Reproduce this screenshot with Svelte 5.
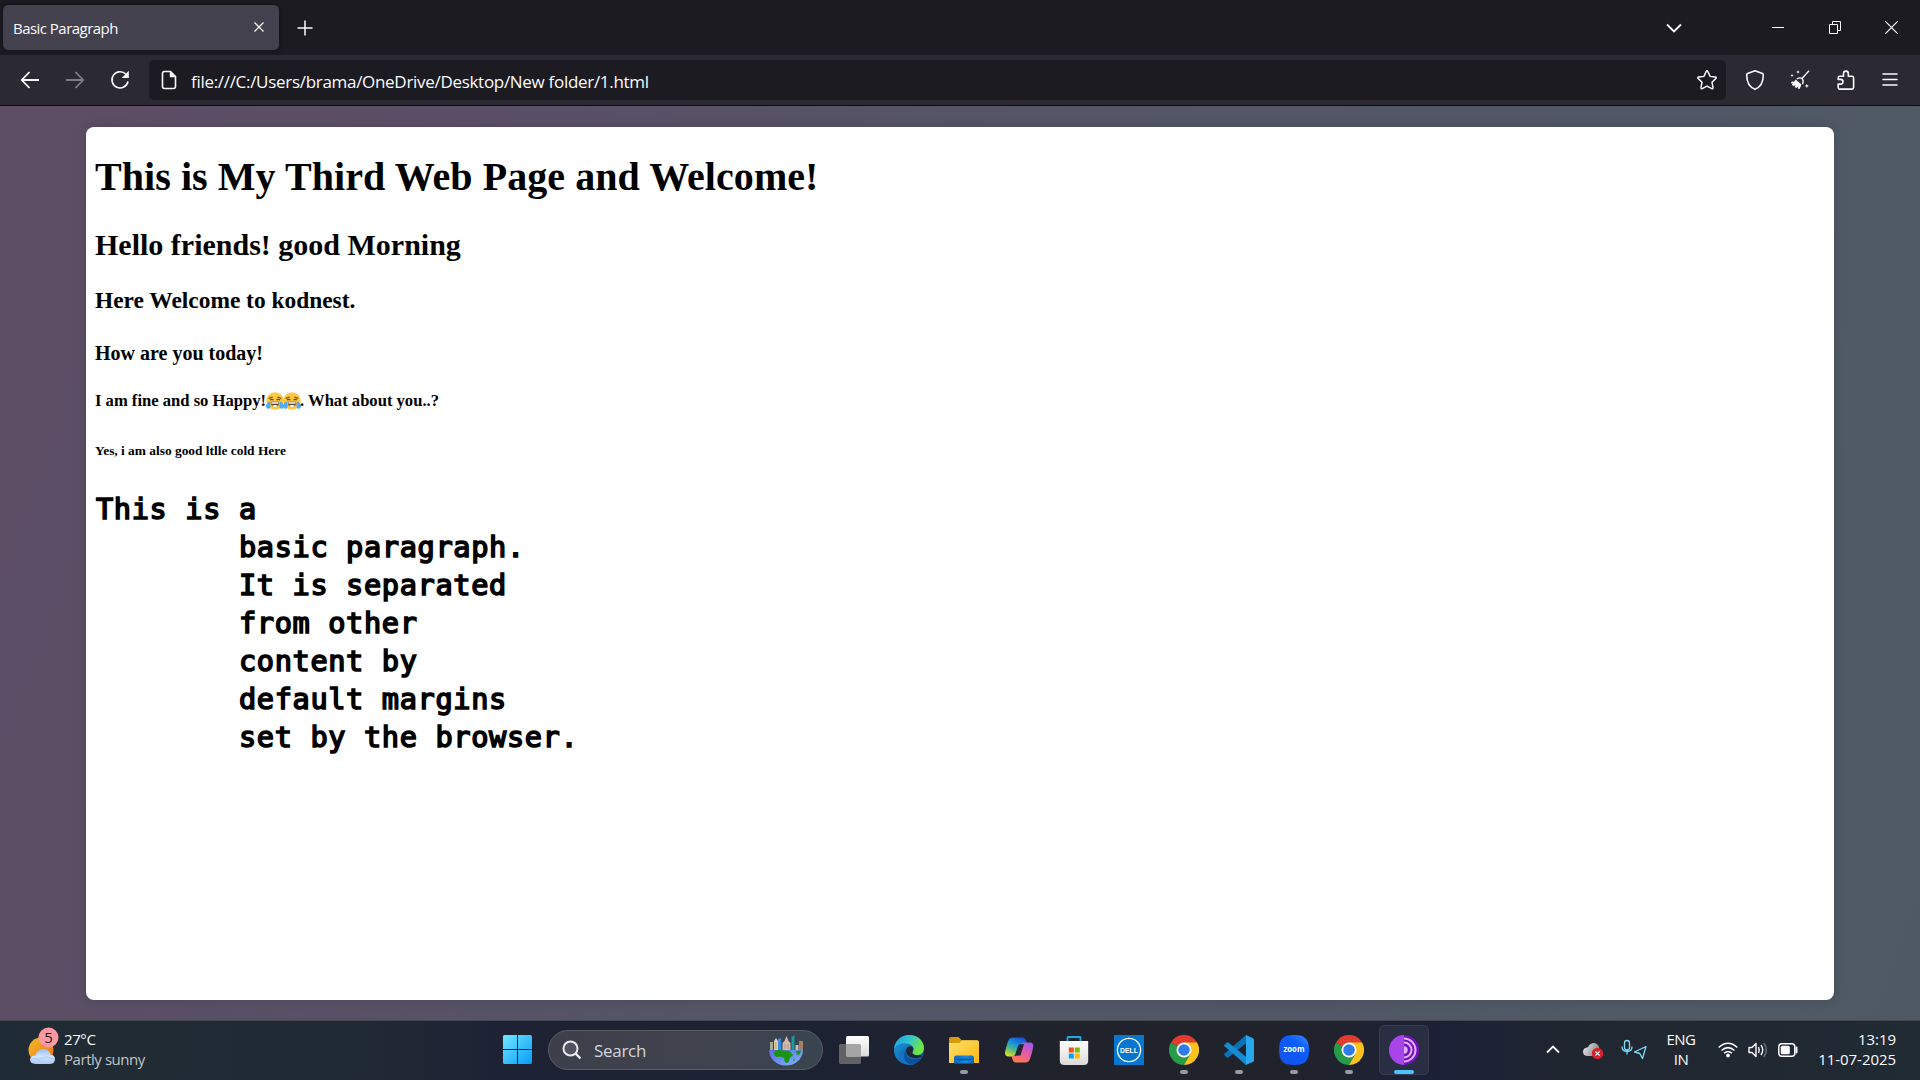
<script>
  const lines = `This is a
        basic paragraph.
        It is separated
        from other
        content by
        default margins
        set by the browser.`;
  const apps = ['tasks', 'edge', 'folder', 'copilot', 'store', 'dell', 'chrome', 'code', 'zoom', 'chrome', 'tor'];
  const running = [false, false, true, false, false, false, true, true, true, true, true];
</script>

{#snippet joy()}
  <svg class="joy" viewBox="0 0 18 18" role="img" aria-label="face with tears of joy">
    <circle cx="9" cy="9" r="8.7" fill="#ffc83d" />
    <path d="M2.8 6.4 6.7 5M11.3 5l3.9 1.4M4 8.2q1.8-1.8 3.5 0M10.5 8.2q1.7-1.8 3.5 0" stroke="#6b4a20" stroke-width="1.2" fill="none" />
    <path d="M4.7 9.8h8.6q-.2 5.4-4.3 5.4T4.7 9.8Z" fill="#60451f" />
    <path d="M5.4 10.2h7.2v1.5H5.4ZM6 13.6q3-1 6 0-1.3 1.6-3 1.6T6 13.6" fill="#fff" />
    <path d="M3.9 9.4q-4 1.6-3.9 5Q.6 17.2 3 16.800q2.600-.8.9-7.400ZM14.100 9.400q4 1.600 3.900 5-.600 2.800-3 2.400-2.600-.8-.9-7.400Z" fill="#50a7f3" />
  </svg>
{/snippet}

{#snippet appIcon(name)}
  <svg class="app-icon" viewBox="0 0 30 30">
    {#if name === 'tasks'}
      <rect x="0" y="9" width="22" height="20" rx="1.500" fill="#626262" />
      <rect x="7" y="1" width="23" height="20.500" rx="1.500" fill="url(#paper)" />
      <path d="M7 9h13.500q1.500 0 1.500 1.500v11H8.500Q7 21.500 7 20Z" fill="#a5a5a5" />
    {:else if name === 'edge'}
      <circle cx="15" cy="15" r="15" fill="url(#edge-base)" />
      <path d="M0 13.500C1.500 5 7.500 0 15.500 0 25 0 30 7 30 13c0 5-4 7.500-8 7-3.500-.3-4.500-1.800-3-4 1-1.600.6-4-1.200-5.500C13 7 4 7.500 0 13.500Z" fill="url(#edge-top)" />
      <path d="M11.500 15C10 22 14 28.500 21 28.700 17 31 10.500 30 7 25c-2.800-4-1.800-9 4-12Z" fill="#1672c5" />
      <path d="M12 14.500c-1.600 8 6 12.500 15.800 8.200C25 27 21 29.500 17.500 29.700 10 27.800 8 20 12 14.500Z" fill="#0c519b" />
      <path d="M12.200 14.500c-1.200 5 4 9.500 11.500 8.300 2.800-.4 4.200-1.300 4.200-.1-.2-2.500-1-2.800-3-2.500-3.200.5-7-.8-6.400-3.200.3-1.400 1.400-2.200.5-4.500-1.800-2.300-5.800-1.300-6.800 2Z" fill="#202633" />
    {:else if name === 'folder'}
      <path d="M0 4q0-2 2-2h7.500l3.500 3.500H27q3 0 3 2V10H0Z" fill="#d99a09" />
      <path d="M0 8h9.500q1.500 0 2.500-1.500l1-1.200h15q2 0 2 2V28H0Z" fill="url(#folder)" />
      <path d="M5 28.500V23q0-2.500 2.500-2.500h15Q25 20.500 25 23v5.500Z" fill="url(#folder-tray)" />
      <path d="M8.500 24.500h13" stroke="#074f94" stroke-width="1.400" stroke-linecap="round" />
    {:else if name === 'copilot'}
      <path d="M9 2.500h9.500q2.500 0 3.300 2.500l1.200 4H17q-2.500 0-3.400 3l-2 6.500q-.9 3-3.600 3H4.500q-3.500 0-3.500-4Q2 12 4 6.500 5.200 2.500 9 2.500Z" fill="url(#cop-a)" />
      <path d="M21.500 27.500H12q-2.500 0-3.300-2.500L7.500 21h3q2.500 0 3.400-3l2.400-8q.9-2.500 3.600-2.500H26q3.500 0 3.300 4-1 6-3 11.500-1.200 4.500-4.800 4.500Z" fill="url(#cop-b)" />
      <path d="m15.700 9.500 4.300-.500-3.500 11.500-4.300.300Z" fill="#202633" />
    {:else if name === 'store'}
      <path d="M8.500 7V2.500Q8.500 2 9 2h12q.5 0 .5.500V7" fill="none" stroke="#1dabe6" stroke-width="1.800" />
      <path d="M.8 6h28.400v19.500q0 4.500-4.500 4.500H5.300Q.8 30 .8 25.500Z" fill="url(#paper)" />
      <path d="M9.800 12.500h5v5h-5Z" fill="#f25022" /><path d="M15.800 12.500h5v5h-5Z" fill="#7fba00" />
      <path d="M9.800 18.500h5v5h-5Z" fill="#00a4ef" /><path d="M15.800 18.500h5v5h-5Z" fill="#ffb900" />
    {:else if name === 'dell'}
      <path d="M0 0h30v30H0Z" fill="#0676ce" />
      <circle cx="15" cy="15" r="11.600" fill="none" stroke="#fff" stroke-width="1.300" />
      <text x="15" y="17.600" text-anchor="middle" textLength="18" lengthAdjust="spacingAndGlyphs" class="dell-name">DELL</text>
    {:else if name === 'chrome'}
      <path d="M15 15 2 7.500A15 15 0 0 1 28 7.500Z" fill="#e33b2e" />
      <path d="M15 15 2 7.500A15 15 0 0 0 15 30l6.500-11.300Z" fill="#269b48" />
      <path d="M15 7.500h13A15 15 0 0 1 15 30l6.500-11.300Z" fill="#fcc21b" />
      <circle cx="15" cy="15" r="7.500" fill="#fff" /><circle cx="15" cy="15" r="5.800" fill="#2f7be8" />
    {:else if name === 'code'}
      <path d="M22 0v8.200L4.300 22.500q-.7.500-1.400 0L.5 20.300q-.8-.8 0-1.500Z" fill="#0b72b8" />
      <path d="M22 30v-8.200L4.300 7.500q-.7-.5-1.400 0L.5 9.700q-.8.8 0 1.500Z" fill="#168bd3" />
      <path d="m22 0 7 3.300q1 .5 1 1.500v20.400q0 1-1 1.500L22 30Z" fill="#28a7ed" />
    {:else if name === 'zoom'}
      <path d="M15 0C26 0 30 4 30 15s-4 15-15 15S0 26 0 15 4 0 15 0Z" fill="url(#zoom-bg)" />
      <text x="15" y="17.300" text-anchor="middle" textLength="21" lengthAdjust="spacingAndGlyphs" class="zoom-name">zoom</text>
    {:else}
      <circle cx="15" cy="15" r="15" fill="#7410c4" />
      <path d="M15 0a15 15 0 0 0 0 30Z" fill="#a845ea" />
      <path d="M15 3.500a11.500 11.500 0 0 1 0 23M15 7.500a7.500 7.500 0 0 1 0 15" fill="none" stroke="#dfb3f7" stroke-width="2" />
      <path d="M15 11.300a3.700 3.700 0 0 1 0 7.400Z" fill="#dfb3f7" />
    {/if}
  </svg>
{/snippet}

<svg class="defs" width="0" height="0" aria-hidden="true">
  <defs>
    <linearGradient id="paper" x2="0" y2="1"><stop stop-color="#fff" /><stop offset="1" stop-color="#dadada" /></linearGradient>
    <linearGradient id="edge-base" x2="1" y2="1"><stop stop-color="#1b9de2" /><stop offset="1" stop-color="#0b4d93" /></linearGradient>
    <linearGradient id="edge-top" x2="1" y2=".4"><stop stop-color="#1b9fe0" /><stop offset=".5" stop-color="#30c3d2" /><stop offset="1" stop-color="#70e83e" /></linearGradient>
    <linearGradient id="folder" x2="1" y2="1"><stop stop-color="#ffe06b" /><stop offset="1" stop-color="#fbb714" /></linearGradient>
    <linearGradient id="folder-tray" x2="1"><stop stop-color="#0b67be" /><stop offset=".6" stop-color="#168be0" /><stop offset="1" stop-color="#0968bf" /></linearGradient>
    <linearGradient id="cop-a" x1=".7" x2=".2" y2="1"><stop stop-color="#1c4fd4" /><stop offset=".35" stop-color="#1590e0" /><stop offset=".65" stop-color="#4eb98a" /><stop offset="1" stop-color="#e8df1b" /></linearGradient>
    <linearGradient id="cop-b" x1=".8" x2=".3" y2="1"><stop stop-color="#9d59e9" /><stop offset=".5" stop-color="#e75aa5" /><stop offset="1" stop-color="#ff7a48" /></linearGradient>
    <linearGradient id="zoom-bg" x1="1" x2=".3" y2="1"><stop stop-color="#3d8cff" /><stop offset=".4" stop-color="#0b5cff" /><stop offset="1" stop-color="#1354ec" /></linearGradient>
    <linearGradient id="win" x2="1" y2="1"><stop stop-color="#6fe8ff" /><stop offset="1" stop-color="#079bf8" /></linearGradient>
    <linearGradient id="sun" x2="1" y2="1"><stop stop-color="#f5bd25" /><stop offset="1" stop-color="#ee7013" /></linearGradient>
    <linearGradient id="cloud" x2="0" y2="1"><stop stop-color="#95bdf5" /><stop offset=".5" stop-color="#d0e4ff" /><stop offset="1" stop-color="#a9c9f8" /></linearGradient>
    <linearGradient id="sea" x2="1" y2="1"><stop stop-color="#5d68e8" /><stop offset="1" stop-color="#82b5fb" /></linearGradient>
    <linearGradient id="onedrive" x2="1" y2=".4"><stop stop-color="#f3f3f3" /><stop offset="1" stop-color="#858789" /></linearGradient>
  </defs>
</svg>

<div class="screen">
  <header class="tabs">
    <div class="tab">
      <span class="tab-title">Basic Paragraph</span>
      <svg width="12" height="12" viewBox="0 0 12 12"><path d="m1.500 1.500 9 9m0-9-9 9" stroke-width="1.300" /></svg>
    </div>
    <svg class="new-tab" width="16" height="16" viewBox="0 0 16 16"><path d="M8 .5v15M.5 8h15" /></svg>
    <div class="window-controls">
      <svg width="16" height="10" viewBox="0 0 16 10"><path d="m1 1.500 7 7 7-7" stroke-width="1.800" /></svg>
      <svg class="minimise" width="12" height="14" viewBox="0 0 12 14"><path d="M0 6.500h12" stroke-width="1" /></svg>
      <svg class="restore" width="12" height="13" viewBox="0 0 12 13"><path d="M.5 3.500h8v9h-8zM3.500 3.500v-3h8v9h-3" stroke-width="1" /></svg>
      <svg class="close" width="13" height="13" viewBox="0 0 13 13"><path d="m.2.2 12.600 12.600m0-12.600L.2 12.800" stroke-width="1.200" /></svg>
    </div>
  </header>

  <nav class="toolbar">
    <svg viewBox="0 0 20 20"><path d="M19 10H2m7.500-8L1.800 10l7.700 8" stroke-width="1.800" /></svg>
    <svg class="dim" viewBox="0 0 20 20"><path d="M1 10h17M10.500 2l7.700 8-7.700 8" stroke-width="1.800" /></svg>
    <svg viewBox="0 0 20 20"><path d="M18 11.500A8.100 8.100 0 1 1 16 4.300" stroke-width="1.600" /><path d="M18.800.8v7.100h-7Z" fill="#fbfbfe" stroke="none" /></svg>
    <div class="address">
      <svg class="page-icon" viewBox="0 0 20 20"><path d="M4.500 1.500h7L16.500 6.500V16.500q0 2-2 2h-9q-2 0-2-2v-13q0-2 2-2Z" stroke-width="1.600" /><path d="M10.800 1.200v6H16.800Z" fill="#fbfbfe" stroke="none" /></svg>
      <span class="url">file:///C:/Users/brama/OneDrive/Desktop/New folder/1.html</span>
      <svg class="star" viewBox="0 0 20 20"><path d="M9.200 1.500q.8-1.500 1.600 0l2.300 4.900 5.200.7q1.500.3.500 1.500L15 12.300l1 5.300q.1 1.600-1.300 1L10 16.200l-4.700 2.400q-1.400.6-1.300-1l1-5.300-3.800-3.700q-1-1.200.5-1.500l5.200-.7Z" /></svg>
    </div>
    <svg class="shield" viewBox="0 0 20 20"><path d="m10 .8 7.400 2.800q.9.4.9 1.400c0 7-3.200 12.300-8.300 14.200C4.900 17.300 1.700 12 1.700 5q0-1 .9-1.400Z" stroke-width="1.600" /></svg>
    <svg class="broom" viewBox="0 0 20 20">
      <path d="M12.400 8 19 .8M6.700 9q3.500-2 5.500-.3 1.800 2.300.300 5.600" stroke-width="1.300" />
      <path d="m5.500 9.500 6 5-1.900 4.600-1.800-.5.500-2-2 1.500-1.700-1.100.900-2-2 .900-1.700-1 1-1.400-2-.2 1-1.700 2.300.2Z" fill="#fbfbfe" stroke="none" />
      <path d="m8 .2.600 1.200 1.200.6-1.200.600L8 3.800l-.6-1.200L6.200 2l1.200-.600Zm-6 3.700.5 1 1 .5-1 .5-.5 1-.5-1-1-.5 1-.5Zm14.800 10 .7 1.300 1.400.7-1.400.7-.7 1.300-.7-1.300-1.400-.7 1.400-.7Z" fill="#fbfbfe" stroke="none" />
    </svg>
    <svg class="puzzle" viewBox="0 0 20 20"><path d="M2.200 9.400V7.900q0-1.600 1.600-1.600h3.700V3.500a2.400 2.400 0 0 1 4.800 0v2.800H16q1.600 0 1.600 1.600v9.600q0 1.600-1.600 1.600H3.800q-1.600 0-1.600-1.600v-3.400h2.400a2.300 2.300 0 0 0 0-4.700Z" stroke-width="1.600" stroke-linejoin="round" /></svg>
    <svg class="menu" viewBox="0 0 20 20"><path d="M3 4h14M3 9.500h14M3 15h14" stroke-width="1.500" stroke-linecap="round" /></svg>
  </nav>

  <main class="viewport">
    <article class="document">
      <h1>This is My Third Web Page and Welcome!</h1>
      <h2>Hello friends! good Morning</h2>
      <h3>Here Welcome to kodnest.</h3>
      <h4>How are you today!</h4>
      <h5>I am fine and so Happy!{@render joy()}{@render joy()}. What about you..?</h5>
      <h6>Yes, i am also good ltlle cold Here</h6>
      <pre>{lines}</pre>
    </article>
  </main>

  <footer class="taskbar">
    <div class="weather">
      <svg width="34" height="40" viewBox="0 0 34 40">
        <circle cx="15" cy="23" r="12.500" fill="url(#sun)" />
        <path d="M9.500 37Q4 36.500 4 32.500q.5-4 5.500-4 1-6 7.500-6.500 6 0 7.500 5.500 4.500.5 4.500 5-.5 4.500-5.500 4.500Z" fill="url(#cloud)" />
        <path d="M4.500 32.500q4-2 9 0 6-5 15 0" fill="none" stroke="#88b3f0" opacity=".5" />
        <circle cx="22.500" cy="10.500" r="10" fill="#ff98a2" />
        <text x="22.500" y="15.800" text-anchor="middle" class="badge">5</text>
      </svg>
      <div><span class="degrees">27°C</span><span class="sky">Partly sunny</span></div>
    </div>

    <svg class="start" viewBox="0 0 29 29"><path d="M1.500 0H14v14H0V1.500Q0 0 1.500 0ZM15 0h12.500Q29 0 29 1.500V14H15ZM0 15h14v14H1.500Q0 29 0 27.500ZM15 15h14v12.500q0 1.500-1.500 1.500H15Z" fill="url(#win)" /></svg>

    <div class="search">
      <svg width="20" height="20" viewBox="0 0 20 20"><circle cx="8.500" cy="8.500" r="7" fill="#51545e" stroke="#e9eaec" stroke-width="2" /><path d="m13.700 13.700 4.800 4.800" stroke="#e9eaec" stroke-width="2.400" /></svg>
      <span class="search-label">Search</span>
      <svg class="globe" width="36" height="32" viewBox="0 0 36 32">
        <path d="M1 16a17 15.500 0 0 0 34 0Z" fill="url(#sea)" />
        <path d="M7 16.500q5-.8 9 0l6 .5 1.500 3 2 .500-3.500 3.500-1.500 4q-2.500 2.500-4-1l-.5-3-4-1.500-4 .5-2.500-3Z" fill="#199516" /><path d="m28 17 5-.500q0 3-3 5l-1.500-2ZM25 27l1.500-3 .2 2.500Z" fill="#199516" />
        <path d="M2 8h3v8H2Z" fill="#a4a89c" /><path d="M14.500 9 16.500 7 18.500 2l2 5 2 2v7h-8Z" fill="#d5b9af" />
        <path d="m6 7 2-3 2 3v9H6Z" fill="#e5cba2" /><path d="m10 5 3-1 .5 12H10Z" fill="#2f8bea" />
        <path d="m23.500 3 3-2v15h-3Z" fill="#149aa1" /><path d="M27.500 11h3v5h-3Z" fill="#d9b8a8" /><path d="M31 7h4v9h-4Z" fill="#a98165" />
        <path d="M17 10v5m3-5v5M7.800 8v7m25-6v6" stroke="#8a7064" stroke-width=".5" />
      </svg>
    </div>

    <div class="apps">
      {#each apps as name, i}
        <div class="app" class:active={i === 10} class:running={running[i]}>{@render appIcon(name)}</div>
      {/each}
    </div>

    <div class="tray">
      <svg class="up" width="14" height="9" viewBox="0 0 14 9"><path d="m1 7.500 6-6 6 6" stroke-width="1.800" /></svg>
      <svg class="drive" width="21" height="18" viewBox="0 0 21 18"><path d="M4 14Q0 13.500 0 9.500q.5-4 5-4.300Q7 1 11.500 1 16 2 16.500 7l-2 7Z" fill="url(#onedrive)" stroke="none" /><circle cx="14.500" cy="11.500" r="5.700" fill="#dc2029" stroke="none" /><path d="m12.300 9.300 4.400 4.400m0-4.400-4.400 4.400" stroke-width="1.200" /></svg>
      <svg class="mic" width="26" height="21" viewBox="0 0 26 21"><path d="M3.500 4a2.500 2.500 0 0 1 5 0v4.500a2.500 2.500 0 0 1-5 0ZM1 7.500q0 5 5 5t5-5M6 12.500v3M25 7.500 13.500 13l5.300 1.500 2.700 5Z" stroke="#79dcf4" stroke-width="1.300" stroke-linejoin="round" /></svg>
      <div class="language"><span>ENG</span><span>IN</span></div>
      <svg class="wifi" width="20" height="16" viewBox="0 0 20 16"><path d="M.7 5.500Q10-3 19.300 5.500M3.500 8.500q6.500-5.700 13 0M6 11.300q4-3.500 8 0" stroke-width="1.500" /><circle cx="10" cy="13.500" r="1.900" fill="#fff" stroke="none" /></svg>
      <svg class="sound" width="20" height="18" viewBox="0 0 20 18"><path d="M1 6.500h3l4-4v13l-4-4H1ZM10.500 6q1.500 3 0 6M13 4q3.500 5 0 10" stroke-width="1.400" stroke-linejoin="round" /><path d="M15.800 2q5 7 0 14" stroke="#69717a" stroke-width="1.400" /></svg>
      <svg class="battery" width="20" height="14" viewBox="0 0 20 14"><rect x=".8" y=".8" width="16" height="12.400" rx="3" stroke-width="1.500" /><rect x="2.800" y="2.800" width="9" height="8.400" rx="1.500" fill="#fff" stroke="none" /><path d="M18.500 4.500v5" stroke-width="2" stroke-linecap="round" /></svg>
      <div class="clock"><span>13:19</span><span class="date">11-07-2025</span></div>
    </div>
  </footer>
</div>

<style>
  :global(body) { margin: 0; overflow: hidden; }
  .defs { position: absolute; }
  .screen { width: 1920px; height: 1080px; display: flex; flex-direction: column; font-family: "Open Sans", "Noto Sans", sans-serif; color: #fbfbfe; }
  .screen * { box-sizing: border-box; }
  svg { display: block; flex: none; }
  span { white-space: nowrap; }

  .tabs { height: 55px; flex: none; display: flex; align-items: flex-start; background: #1c1b22; padding: 5px 22px 0 3px; }
  .tabs svg, .toolbar svg, .tray svg { fill: none; stroke: #fbfbfe; stroke-width: 1.500; }
  .tab { width: 276px; height: 45px; display: flex; align-items: center; justify-content: space-between; background: #42414d; border-radius: 5px; padding: 0 14px 0 10px; box-shadow: 0 0 4px #0008; }
  .tab-title { font-size: 15px; letter-spacing: -.53px; }
  .tab svg { margin-bottom: 1px; }
  .new-tab { margin: 15px 0 0 18px; }
  .window-controls { display: flex; align-items: center; margin: 16px 0 0 auto; height: 13px; }
  .minimise { margin-left: 90px; }
  .restore { margin-left: 45px; }
  .close { margin-left: 44px; }

  .toolbar { height: 51px; flex: none; display: flex; align-items: center; background: #2b2a33; border-bottom: 1px solid #0c0c0d; padding: 0 20px; }
  .toolbar svg { width: 20px; height: 20px; }
  .toolbar > svg { margin-right: 25px; }
  .toolbar .dim { opacity: .4; }
  .address { width: 1577px; height: 40px; display: flex; align-items: center; background: #1c1b22; border-radius: 5px; margin-left: -6px; padding: 0 9px 0 10px; }
  .url { font-size: 17px; letter-spacing: -.3px; margin: 3px 0 0 12px; }
  .address .star { margin-left: auto; }
  .toolbar .shield { margin: 0 25px 0 19px; }
  .toolbar .puzzle { margin: 0 24px 0 1px; }
  .toolbar .menu { margin-right: 0; }

  .viewport { height: 914px; flex: none; padding: 21px 86px 20px; background: linear-gradient(110deg, #5d4d65 0%, #5a4f66 22%, #535667 52%, #505766 76%, #4f5a64 86%, #4e5965 100%); }
  .document { height: 873px; overflow: hidden; background: #fff; border-radius: 8px; color: #000; padding: 0 9px; box-shadow: 0 0 8px #3a394466; font-family: "Liberation Serif", serif; font-size: 20px; }
  h1, h2, h3, h4, h5, h6 { font-weight: 700; }
  h1 { font-size: 40px; line-height: 46px; margin: 27px 0 0; letter-spacing: .06px; }
  h2 { font-size: 30px; line-height: 35px; margin: 27px 0 0; }
  h3 { font-size: 23.400px; line-height: 28px; margin: 24px 0 0; }
  h4 { font-size: 20px; line-height: 24px; margin: 27px 0 0; }
  h5 { font-size: 16.600px; line-height: 20px; margin: 26px 0 0; }
  h6 { font-size: 13.400px; line-height: 16px; margin: 32px 0 0; }
  .joy { display: inline-block; width: 18px; height: 18px; margin-right: -1px; vertical-align: -4px; }
  pre { margin: 31px 0 0 1px; font: 400 28.600px/38px "DejaVu Sans Mono", monospace; letter-spacing: .650px; -webkit-text-stroke: 1.600px #000; }

  .taskbar { height: 60px; flex: none; display: flex; align-items: center; border-top: 1px solid #45494f; background: linear-gradient(90deg, #202c35 0%, #202a34 18%, #1d2234 27%, #1d2233 43%, #20232c 55%, #20232d 69%, #1b2038 75%, #202630 81%, #202b34 100%); padding: 0 24px 2px 26px; }
  .weather { width: 477px; display: flex; align-items: center; gap: 4px; }
  .weather svg { margin-top: -5px; }
  .weather div, .language, .clock { display: flex; flex-direction: column; font-size: 15px; line-height: 20px; margin-top: -2px; }
  .degrees { letter-spacing: -.4px; }
  .sky { color: #c1c5c8; letter-spacing: -.45px; }
  .badge { font-size: 15px; fill: #241b20; }
  .start { width: 29px; height: 29px; }
  .search { width: 275px; height: 40px; margin: 0 6px 0 16px; border: 1px solid #5a5d66; border-radius: 20px; display: flex; align-items: center; padding: 0 18px 0 13px; background: linear-gradient(90deg, #3d404b, #40434e 60%, #38444f); }
  .search-label { font-size: 17px; color: #d3d5da; margin: 1px 0 0 12px; letter-spacing: -.3px; }
  .globe { margin-left: auto; }
  .apps { display: flex; gap: 5px; }
  .app { width: 50px; height: 50px; border-radius: 5px; border: 1px solid transparent; display: grid; place-items: center; position: relative; }
  .app-icon { width: 30px; height: 30px; }
  .app.running::after { content: ""; position: absolute; left: 20px; bottom: 0; width: 8px; height: 4px; border-radius: 2px; background: #979aa0; }
  .app.active { background: #2a2e43; border-color: #383c4e; }
  .app.active.running::after { width: 20px; left: 14px; background: #4cc2ff; }
  .dell-name { font: 700 7.500px "Liberation Sans", sans-serif; fill: #fff; }
  .zoom-name { font: 700 8px "Open Sans", sans-serif; fill: #fff; }
  .tray { margin-left: auto; width: 350px; display: flex; align-items: center; }
  .drive { margin: 3px 0 0 23px; }
  .mic { margin-left: 17px; }
  .language { width: 50px; margin-left: 9px; align-items: center; letter-spacing: -.5px; }
  .wifi { margin-left: 12px; }
  .sound { margin-left: 10px; }
  .battery { margin-left: 10px; }
  .clock { margin-left: auto; align-items: flex-end; letter-spacing: -.05px; }
</style>
